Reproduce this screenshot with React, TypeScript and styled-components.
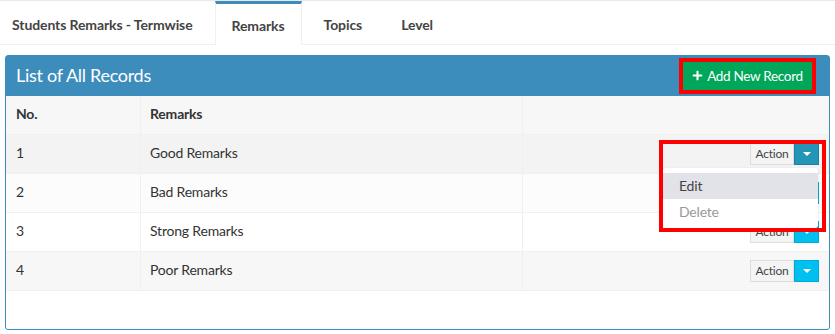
import React from "react";
import styled, { createGlobalStyle } from "styled-components";
import { FaPlus } from "react-icons/fa";

const Global = createGlobalStyle`
  html, body { margin: 0; padding: 0; background: #fff; }
  body { font-family: "Lato", "Liberation Sans", sans-serif; color: #333; font-size: 14px; }
  * { box-sizing: border-box; }
`;

const Page = styled.div`
  width: 835px;
  height: 334px;
  overflow: hidden;
  border-top: 1px solid #e6e9ee;
`;

const TabBar = styled.ul`
  list-style: none;
  margin: 0;
  padding: 0;
  display: flex;
  gap: 5px;
  height: 44px;
  border-bottom: 1px solid #f0f0f0;
`;

const Tab = styled.li<{ $active?: boolean; $first?: boolean }>`
  display: flex;
  align-items: center;
  padding: 1px 16px 0 ${(p) => (p.$first ? "11px" : "16px")};
  font-weight: 700;
  font-size: 14px;
  letter-spacing: -0.1px;
  color: #444;
  border-top: 3px solid ${(p) => (p.$active ? "#3c8dbc" : "transparent")};
  border-left: 1px solid ${(p) => (p.$active ? "#f0f0f0" : "transparent")};
  border-right: 1px solid ${(p) => (p.$active ? "#f0f0f0" : "transparent")};
  margin-bottom: ${(p) => (p.$active ? "-1px" : "0")};
  background: #fff;
`;

const Panel = styled.section`
  margin: 10px 5px 0 5px;
  height: 275px;
  border: 1px solid #3c8dbc;
  border-radius: 3px;
  background: #fff;
`;

const PanelHeader = styled.header`
  height: 40px;
  background: #3c8dbc;
  display: flex;
  align-items: center;
  justify-content: space-between;
  padding: 0 17px 2px 10px;
`;

const Title = styled.h3`
  margin: 0;
  font-weight: 400;
  font-size: 18px;
  letter-spacing: -0.3px;
  color: #fff;
`;

const AddButton = styled.button`
  display: flex;
  align-items: center;
  justify-content: center;
  gap: 4px;
  height: 28px;
  width: 129px;
  margin-top: 2px;
  padding: 0 0 1px 0;
  white-space: nowrap;
  border: none;
  background: #00a65a;
  color: #fff;
  font-family: inherit;
  font-size: 13.5px;
  letter-spacing: -0.3px;
  outline: 4px solid #ff0000;
  svg { width: 11px; height: 11px; }
`;

const Table = styled.div`
  display: grid;
  grid-template-columns: 135px 382px 1fr;
`;

const Row = styled.div<{ $bg: string; $head?: boolean }>`
  display: contents;
  & > div {
    background: ${(p) => p.$bg};
    font-weight: ${(p) => (p.$head ? 700 : 400)};
  }
`;

const Cell = styled.div<{ $align?: string }>`
  height: 39px;
  display: flex;
  align-items: center;
  justify-content: ${(p) => p.$align || "flex-start"};
  padding: 0 10px 3px 9px;
  border-bottom: 1px solid #f0f0f0;
  border-right: 1px solid #f0f0f0;
  font-size: 14px;
  letter-spacing: -0.2px;
  color: #333;
  position: relative;
  &:last-child { border-right: none; padding: 0 10px 0 0; }
  &:first-child { padding-left: 10px; }
`;

const Group = styled.div`
  display: flex;
  height: 22px;
  position: relative;
`;

const ActionBtn = styled.span`
  display: flex;
  align-items: center;
  justify-content: center;
  width: 44px;
  padding-bottom: 1px;
  background: #f4f4f4;
  border: 1px solid #ddd;
  font-size: 12px;
  letter-spacing: -0.2px;
  color: #444;
`;

const Caret = styled.span<{ $active?: boolean }>`
  width: 25px;
  display: flex;
  align-items: center;
  justify-content: center;
  background: ${(p) => (p.$active ? "#2396b8" : "#00c0ef")};
  border: 1px solid ${(p) => (p.$active ? "#1e7fa0" : "#00acd6")};
  &::after {
    content: "";
    border-left: 4px solid transparent;
    border-right: 4px solid transparent;
    border-top: 4px solid #fff;
  }
`;

const Menu = styled.ul`
  position: absolute;
  top: 25px;
  right: 1px;
  width: 155px;
  margin: 0;
  padding: 5px 0 3px;
  list-style: none;
  background: #fff;
  box-shadow: 0 1px 3px rgba(0, 0, 0, 0.12);
  border-radius: 3px;
  z-index: 2;
`;

const MenuItem = styled.li<{ $hover?: boolean }>`
  height: 26px;
  display: flex;
  align-items: center;
  padding: 0 17px 2px 16px;
  font-size: 14px;
  color: ${(p) => (p.$hover ? "#444" : "#999")};
  background: ${(p) => (p.$hover ? "#e1e3e9" : "transparent")};
`;

const Annotation = styled.div`
  position: absolute;
  left: -91px;
  top: -3px;
  width: 167px;
  height: 92px;
  border: 4px solid #ff0000;
  z-index: 3;
  pointer-events: none;
`;

const rows = [
  { no: "1", text: "Good Remarks", bg: "#f3f3f3", open: true },
  { no: "2", text: "Bad Remarks", bg: "#fcfcfc" },
  { no: "3", text: "Strong Remarks", bg: "#ffffff" },
  { no: "4", text: "Poor Remarks", bg: "#f7f7f7" },
];

export default function App() {
  return (
    <Page>
      <Global />
      <TabBar>
        <Tab $first>Students Remarks - Termwise</Tab>
        <Tab $active>Remarks</Tab>
        <Tab>Topics</Tab>
        <Tab>Level</Tab>
      </TabBar>
      <Panel>
        <PanelHeader>
          <Title>List of All Records</Title>
          <AddButton>
            <FaPlus />
            Add New Record
          </AddButton>
        </PanelHeader>
        <Table>
          <Row $bg="#f7f7f7" $head>
            <Cell>No.</Cell>
            <Cell>Remarks</Cell>
            <Cell />
          </Row>
          {rows.map((r) => (
            <Row key={r.no} $bg={r.bg}>
              <Cell>{r.no}</Cell>
              <Cell>{r.text}</Cell>
              <Cell $align="flex-end" style={r.open ? { zIndex: 2 } : undefined}>
                <Group>
                  <ActionBtn>Action</ActionBtn>
                  <Caret $active={r.open} />
                  {r.open && (
                    <>
                      <Menu>
                        <MenuItem $hover>Edit</MenuItem>
                        <MenuItem>Delete</MenuItem>
                      </Menu>
                      <Annotation />
                    </>
                  )}
                </Group>
              </Cell>
            </Row>
          ))}
        </Table>
      </Panel>
    </Page>
  );
}
